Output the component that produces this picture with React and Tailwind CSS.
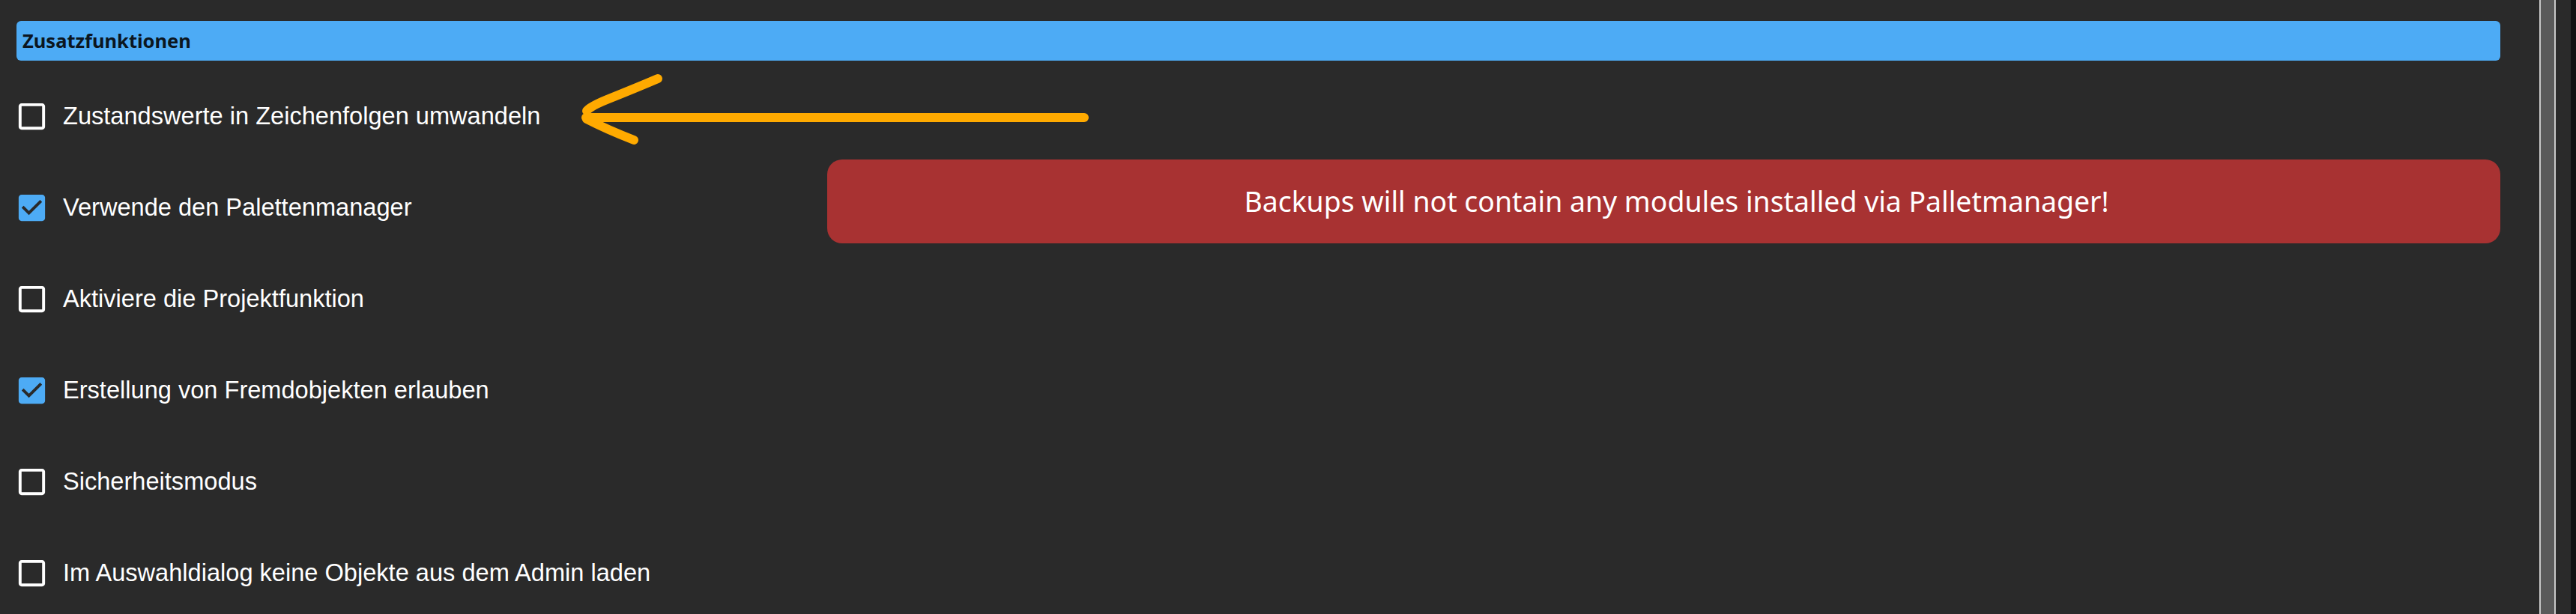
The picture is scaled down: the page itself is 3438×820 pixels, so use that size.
import React from "react";

const BOX_ON =
  "M19 3H5c-1.11 0-2 .9-2 2v14c0 1.1.89 2 2 2h14c1.11 0 2-.9 2-2V5c0-1.1-.89-2-2-2zm-9 14l-5-5 1.41-1.41L10 14.17l7.59-7.59L19 8l-9 9z";
const BOX_OFF =
  "M19 5v14H5V5h14m0-2H5c-1.1 0-2 .9-2 2v14c0 1.1.9 2 2 2h14c1.1 0 2-.9 2-2V5c0-1.1-.9-2-2-2z";

const options = [
  { label: "Zustandswerte in Zeichenfolgen umwandeln", checked: false },
  { label: "Verwende den Palettenmanager", checked: true, banner: true },
  { label: "Aktiviere die Projektfunktion", checked: false },
  { label: "Erstellung von Fremdobjekten erlauben", checked: true },
  { label: "Sicherheitsmodus", checked: false },
  { label: "Im Auswahldialog keine Objekte aus dem Admin laden", checked: false },
];

function Checkbox({ checked }) {
  return (
    <svg
      viewBox="0 0 24 24"
      className={
        "w-[47px] h-[47px] -ml-[3px] shrink-0 " +
        (checked ? "fill-[#4dabf5]" : "fill-white")
      }
    >
      <path d={checked ? BOX_ON : BOX_OFF} />
    </svg>
  );
}

// hand drawn arrow pointing at the first option
function Arrow() {
  return (
    <svg
      className="absolute left-[770px] top-[95px] w-[690px] h-[105px] pointer-events-none"
      viewBox="0 0 690 105"
      fill="none"
      stroke="#ffaa00"
      strokeWidth="12"
      strokeLinecap="round"
      strokeLinejoin="round"
    >
      <path d="M12 62 L677 62" />
      <path d="M13 53 Q18 47 40 38 Q80 22 108 10" />
      <path d="M13 64 Q40 78 76 92" />
    </svg>
  );
}

function Row({ option }) {
  return (
    <div className="h-[122px] flex items-center">
      <Checkbox checked={option.checked} />
      <span className="ml-[18px] text-[32.6px] text-white font-['Liberation_Sans',Arial,sans-serif] whitespace-nowrap">
        {option.label}
      </span>
      {option.banner && (
        <div className="ml-auto -mt-4 w-[2233px] h-[112px] rounded-[20px] bg-[#a83232] flex items-center justify-center pl-[34px]">
          <span className="text-white text-[37.4px] font-['Noto_Sans',sans-serif]">
            Backups will not contain any modules installed via Palletmanager!
          </span>
        </div>
      )}
    </div>
  );
}

export default function App() {
  return (
    <div className="h-[820px] w-full overflow-hidden bg-[#2a2a2a] flex">
      <div className="relative w-[3359px] shrink-0 px-[22px] pt-[28px]">
        <div className="h-[53px] rounded-[6px] bg-[#4dabf5] flex items-center pl-[8px]">
          <span className="text-[25.5px] font-bold text-[#0b1620] font-['Noto_Sans',sans-serif]">
            Zusatzfunktionen
          </span>
        </div>
        <div className="mt-[13px]">
          {options.map((option, index) => (
            <Row key={index} option={option} />
          ))}
        </div>
        <Arrow />
      </div>
      <div className="w-[30px] shrink-0" />
      <div className="w-[22px] shrink-0 bg-[#5a5a5a] border-x-2 border-[#c8c8c8]" />
      <div className="w-[20px] shrink-0" />
      <div className="flex-1 bg-[#111111]" />
    </div>
  );
}
